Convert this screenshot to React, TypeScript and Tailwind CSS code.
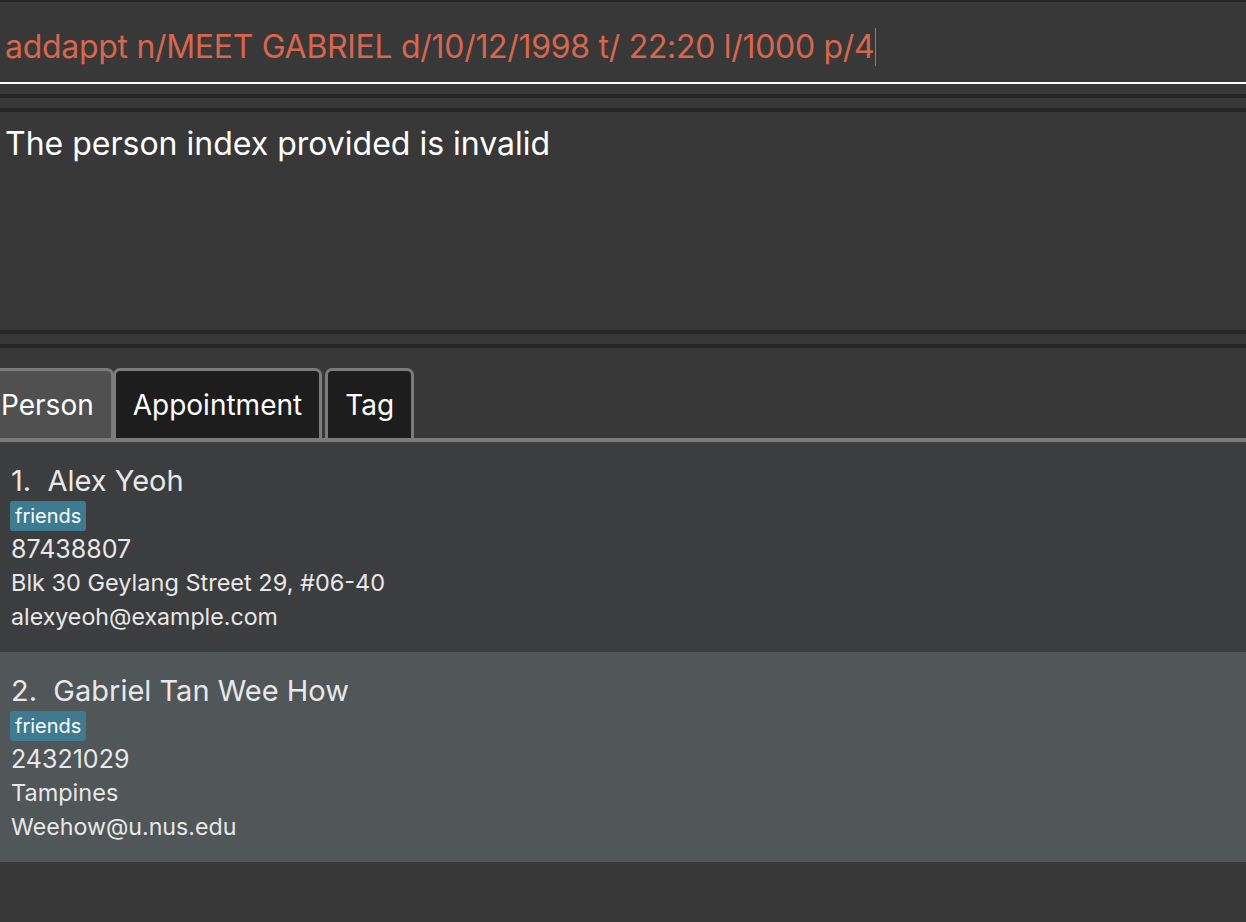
import React from "react";

type Person = {
  name: string;
  tags: string[];
  phone: string;
  address: string;
  email: string;
};

const persons: Person[] = [
  {
    name: "Alex Yeoh",
    tags: ["friends"],
    phone: "87438807",
    address: "Blk 30 Geylang Street 29, #06-40",
    email: "alexyeoh@example.com",
  },
  {
    name: "Gabriel Tan Wee How",
    tags: ["friends"],
    phone: "24321029",
    address: "Tampines",
    email: "Weehow@u.nus.edu",
  },
];

const tabs = [
  { name: "Person", active: true, margin: "-ml-[19px]" },
  { name: "Appointment", active: false, margin: "-ml-px" },
  { name: "Tag", active: false, margin: "ml-[3px]" },
];

function App() {
  return (
    <main
      className="w-full h-[922px] overflow-hidden flex flex-col bg-[#383838] border-t-2 border-[#262626]"
      style={{ fontFamily: "Inter, 'Noto Sans', sans-serif" }}
    >
      {/* command box */}
      <div className="h-[82px] shrink-0 flex items-center pl-[5px] pt-[10px] border-b-2 border-white">
        <span className="text-[32px] text-[#d7664f] tracking-[-0.3px] leading-none">
          addappt n/MEET GABRIEL d/10/12/1998 t/ 22:20 l/1000 p/4
        </span>
        <span className="w-px h-[38px] bg-[#d7664f] ml-px" />
      </div>

      <div className="h-[10px] shrink-0" />
      <div className="h-[4px] shrink-0 bg-[#262626]" />
      <div className="h-[10px] shrink-0" />
      <div className="h-[4px] shrink-0 bg-[#262626]" />

      {/* result display */}
      <div className="h-[218px] shrink-0 pl-[5px] pt-[12px]">
        <p className="text-[32px] text-white leading-[40px]">
          The person index provided is invalid
        </p>
      </div>

      <div className="h-[4px] shrink-0 bg-[#262626]" />
      <div className="h-[10px] shrink-0" />
      <div className="h-[4px] shrink-0 bg-[#262626]" />

      {/* tabs */}
      <div className="h-[94px] shrink-0 flex items-end border-b-4 border-[#7b7b7b]">
        {tabs.map((tab, index) => (
          <div
            key={index}
            className={`h-[70px] flex items-center justify-center px-[17px] border-t-3 border-x-3 border-[#7b7b7b] rounded-t-[7px] text-[28px] text-white ${tab.margin}
              ${tab.active ? "bg-[#505050]" : "bg-[#1d1d1d]"}`}
          >
            {tab.name}
          </div>
        ))}
      </div>

      {/* person list */}
      <div className="flex flex-col">
        {persons.map((p, index) => (
          <div
            key={index}
            className={`h-[210px] pl-[11px] pt-[22px] text-[#e8e8e8] ${
              index % 2 === 0 ? "bg-[#3c3d3f]" : "bg-[#515658]"
            }`}
          >
            <div className="text-[29px] leading-[34px]">
              {index + 1}.&nbsp; {p.name}
            </div>
            <div className="flex gap-1 mt-[3px]">
              {p.tags.map((t) => (
                <span
                  key={t}
                  className="bg-[#3e7b91] text-white text-[20px] leading-[30px] px-[5px] rounded-[3px] -ml-px"
                >
                  {t}
                </span>
              ))}
            </div>
            <div className="text-[25px] leading-[34px] mt-[1px]">{p.phone}</div>
            <div className="text-[23.5px] leading-[34px]">{p.address}</div>
            <div className="text-[23.2px] leading-[34px]">{p.email}</div>
          </div>
        ))}
      </div>
    </main>
  );
}

export default App;
